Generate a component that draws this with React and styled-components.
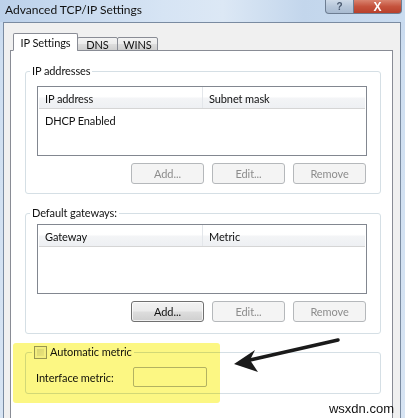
import React from "react";
import styled, { createGlobalStyle } from "styled-components";

const GlobalStyle = createGlobalStyle`
  html, body {
    margin: 0;
    padding: 0;
    background: #fff;
  }
  body {
    font-family: Lato, "Noto Sans", sans-serif;
    font-size: 11px;
    letter-spacing: -0.1px;
    color: #111;
  }
`;

const Window = styled.div`
  position: relative;
  width: 405px;
  height: 418px;
  overflow: hidden;
  background: linear-gradient(180deg, #c6d8ee 0%, #cfdff1 60px, #d7e4f3 100%);
  display: flex;
  flex-direction: column;
`;

const TitleBar = styled.div`
  height: 22px;
  flex: none;
  display: flex;
  align-items: flex-start;
  padding-left: 5px;
  background: linear-gradient(90deg, #bcd1ea 0%, #d6e4f4 40%, #dce8f5 55%, #c3d6ec 75%, #cadcf0 100%);
`;

const Title = styled.span`
  font-size: 12px;
  letter-spacing: 0;
  line-height: 20px;
  color: #111;
`;

const CaptionButtons = styled.div`
  margin-left: auto;
  margin-right: 3px;
  display: flex;
`;

const CaptionButton = styled.div`
  width: ${(p) => (p.$close ? 47 : 27)}px;
  height: 13px;
  display: flex;
  align-items: center;
  justify-content: center;
  border: 1px solid #6d7d92;
  border-top: none;
  border-left-width: ${(p) => (p.$close ? 0 : 1)}px;
  border-radius: ${(p) => (p.$close ? "0 0 4px 0" : "0 0 0 4px")};
  background: ${(p) =>
    p.$close
      ? "linear-gradient(180deg, #d9836f 0%, #c5533d 50%, #b8402c 100%)"
      : "linear-gradient(180deg, #cfdbe9 0%, #b7c7da 50%, #a9bbd1 100%)"};
  color: ${(p) => (p.$close ? "#fff" : "#4a5a70")};
  font-family: "Liberation Sans", Arial, sans-serif;
  font-weight: bold;
  font-size: ${(p) => (p.$close ? 12 : 10)}px;
  line-height: 1;
`;

const Body = styled.div`
  flex: 1;
  margin: 0 4px 0 3px;
  border: 1px solid #7a8ba1;
  border-bottom: none;
  background: #f0f0f0;
  padding: 10px 7px 0 6px;
  display: flex;
  flex-direction: column;
`;

const TabStrip = styled.div`
  display: flex;
  align-items: flex-end;
  padding-left: 3px;
  margin-bottom: -1px;
  position: relative;
  z-index: 1;
`;

const Tab = styled.div`
  height: ${(p) => (p.$active ? 18 : 14)}px;
  padding: 0 3px;
  margin-left: ${(p) => (p.$active ? 0 : -1)}px;
  display: flex;
  align-items: center;
  justify-content: center;
  width: ${(p) => p.$w}px;
  box-sizing: border-box;
  border: 1px solid #898c95;
  border-bottom: ${(p) => (p.$active ? "1px solid #fff" : "1px solid #898c95")};
  border-radius: 2px 2px 0 0;
  background: ${(p) =>
    p.$active ? "#fff" : "linear-gradient(180deg, #f3f3f3 0%, #ebebeb 50%, #dddddd 51%, #cfcfcf 100%)"};
  &:first-child {
    margin-left: 0;
  }
`;

const Panel = styled.div`
  flex: 1;
  border: 1px solid #898c95;
  border-bottom: none;
  background: #fff;
  padding: 13px 11px 40px 14px;
  display: flex;
  flex-direction: column;
`;

const Group = styled.fieldset`
  margin: ${(p) => p.$mt || 0}px 0 0 0;
  padding: ${(p) => p.$pt}px 13px ${(p) => p.$pb}px ${(p) => p.$pl || 11}px;
  min-inline-size: 0;
  border: 1px solid #d5dfe5;
  border-radius: 3px;
  display: flex;
  flex-direction: column;
`;

const Legend = styled.legend`
  padding: 0 2px;
  margin-left: ${(p) => p.$shift}px;
  line-height: 14px;
  height: 14px;
  display: flex;
  align-items: center;
  gap: 3px;
`;

const ListView = styled.div`
  height: 68px;
  border: 1px solid #828790;
  background: #fff;
  display: flex;
  flex-direction: column;
  padding: 0 1px;
`;

const ListHeader = styled.div`
  display: grid;
  grid-template-columns: 164px 1fr;
  height: 21px;
  border-bottom: 1px solid #d5d5d5;
  background: linear-gradient(180deg, #ffffff 0%, #ffffff 45%, #f3f4f6 55%, #eef0f3 100%);
`;

const HeaderCell = styled.div`
  display: flex;
  align-items: center;
  padding-left: 6px;
  border-right: 1px solid ${(p) => (p.$last ? "transparent" : "#e3e6ea")};
  padding-top: 1px;
`;

const ListRow = styled.div`
  height: 18px;
  margin-top: 2px;
  display: flex;
  align-items: center;
  padding-left: 6px;
`;

const ButtonRow = styled.div`
  display: flex;
  justify-content: flex-end;
  gap: 8px;
  margin-top: 7px;
  padding-right: 1px;
`;

const Button = styled.div`
  width: 73px;
  height: 21px;
  box-sizing: border-box;
  display: flex;
  align-items: center;
  justify-content: center;
  border-radius: 3px;
  border: 1px solid ${(p) => (p.$disabled ? "#b5b8bb" : "#707070")};
  color: ${(p) => (p.$disabled ? "#8d8d8d" : "#111")};
  background: ${(p) =>
    p.$disabled
      ? "#f4f4f4"
      : "linear-gradient(180deg, #f2f2f2 0%, #ebebeb 48%, #dddddd 52%, #cfcfcf 100%)"};
  box-shadow: ${(p) => (p.$disabled ? "none" : "inset 0 0 0 1px rgba(255,255,255,0.7)")};
`;

const Checkbox = styled.span`
  width: 11px;
  height: 11px;
  border: 1px solid #9a9b9c;
  background: linear-gradient(135deg, #d9d9d9 0%, #f0f0f0 100%);
  box-shadow: inset 0 0 0 2px #f6f6f6;
  flex: none;
`;

const FieldRow = styled.div`
  display: flex;
  align-items: center;
  height: 20px;
`;

const FieldLabel = styled.span`
  width: 97px;
`;

const TextBox = styled.div`
  width: 74px;
  height: 20px;
  box-sizing: border-box;
  border: 1px solid #b5b8bd;
  border-radius: 2px;
  background: #fff;
`;

const Highlight = styled.div`
  position: absolute;
  left: 13px;
  top: 343px;
  width: 207px;
  height: 60px;
  border-radius: 3px;
  background: #fcf783;
  mix-blend-mode: multiply;
  pointer-events: none;
`;

const Arrow = styled.svg`
  position: absolute;
  left: 0;
  top: 0;
  pointer-events: none;
`;

const Watermark = styled.span`
  position: absolute;
  right: 11px;
  bottom: 2px;
  font-family: "Liberation Sans", Arial, sans-serif;
  font-size: 13px;
  letter-spacing: 0;
  color: #111;
`;

function List({ cols, rows }) {
  return (
    <ListView>
      <ListHeader>
        <HeaderCell>{cols[0]}</HeaderCell>
        <HeaderCell $last>{cols[1]}</HeaderCell>
      </ListHeader>
      {rows.map((r) => (
        <ListRow key={r}>{r}</ListRow>
      ))}
    </ListView>
  );
}

export default function App() {
  return (
    <>
      <GlobalStyle />
      <Window>
        <TitleBar>
          <Title>Advanced TCP/IP Settings</Title>
          <CaptionButtons>
            <CaptionButton>?</CaptionButton>
            <CaptionButton $close>X</CaptionButton>
          </CaptionButtons>
        </TitleBar>
        <Body>
          <TabStrip>
            <Tab $active $w={65}>IP Settings</Tab>
            <Tab $w={41}>DNS</Tab>
            <Tab $w={41}>WINS</Tab>
          </TabStrip>
          <Panel>
            <Group $pt={8} $pb={9}>
              <Legend $shift={-7}>IP addresses</Legend>
              <List cols={["IP address", "Subnet mask"]} rows={["DHCP Enabled"]} />
              <ButtonRow>
                <Button $disabled>Add...</Button>
                <Button $disabled>Edit...</Button>
                <Button $disabled>Remove</Button>
              </ButtonRow>
            </Group>
            <Group $mt={12} $pt={4} $pb={11}>
              <Legend $shift={-7}>Default gateways:</Legend>
              <List cols={["Gateway", "Metric"]} rows={[]} />
              <ButtonRow>
                <Button>Add...</Button>
                <Button $disabled>Edit...</Button>
                <Button $disabled>Remove</Button>
              </ButtonRow>
            </Group>
            <Group $mt={11} $pt={8} $pb={6} $pl={10}>
              <Legend $shift={-4}>
                <Checkbox />
                Automatic metric
              </Legend>
              <FieldRow>
                <FieldLabel>Interface metric:</FieldLabel>
                <TextBox />
              </FieldRow>
            </Group>
          </Panel>
        </Body>
        <Highlight />
        <Arrow width="405" height="418" viewBox="0 0 405 418">
          <line x1="338" y1="340" x2="250" y2="360" stroke="#1a1a1a" strokeWidth="3.5" strokeLinecap="round" />
          <polygon points="234,364 255,350 250,360 258,372" fill="#1a1a1a" />
        </Arrow>
        <Watermark>wsxdn.com</Watermark>
      </Window>
    </>
  );
}
